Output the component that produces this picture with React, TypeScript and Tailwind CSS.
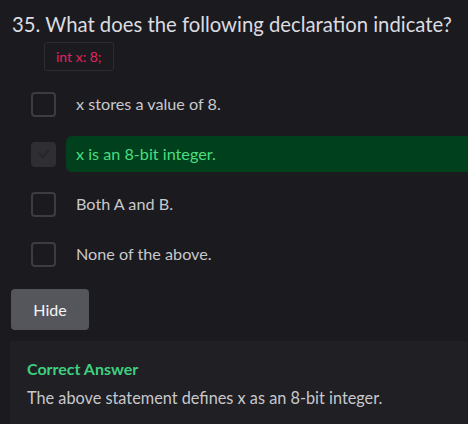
import React from "react";

const options = [
  { text: "x stores a value of 8.", correct: false },
  { text: "x is an 8-bit integer.", correct: true },
  { text: "Both A and B.", correct: false },
  { text: "None of the above.", correct: false },
];

export default function App() {
  return (
    <div className="w-[468px] h-[424px] overflow-hidden bg-[#1b1b1f] text-[#d4d4d8]" style={{ fontFamily: "Lato, 'Noto Sans', sans-serif" }}>
      <div className="pl-[12px] pt-[11px]">
        <h1 className="text-[20.3px] leading-[26px] text-[#dcdce0]">35. What does the following declaration indicate?</h1>
        <div className="ml-[32px] mt-[5px] inline-flex h-[29px] items-center rounded-[3px] border border-[#2c2c31] px-[11px] text-[14px] text-[#e0245e]">
          int x: 8;
        </div>
      </div>
      <div className="mt-[15px] flex flex-col gap-[14px]">
        {options.map((o) => (
          <div key={o.text} className="flex h-[36px] items-center">
            <div className="ml-[31px] flex w-[35px] shrink-0">
              {o.correct ? (
                <div className="flex h-[25px] w-[25px] items-center justify-center rounded-[4px] bg-[#2e2e33]">
                  <svg width="14" height="14" viewBox="0 0 24 24" fill="none" stroke="#26262b" strokeWidth="4" strokeLinecap="round" strokeLinejoin="round">
                    <path d="M5 12l5 5 9-10" />
                  </svg>
                </div>
              ) : (
                <div className="h-[25px] w-[25px] rounded-[4px] border-2 border-[#3c3c42]" />
              )}
            </div>
            <div className={`flex h-[36px] flex-1 items-center rounded-l-[6px] pl-[10px] text-[16.2px] ${o.correct ? "bg-[#01401c] text-[#4ade80]" : "text-[#c8c8cc]"}`}>
              {o.text}
            </div>
          </div>
        ))}
      </div>
      <button className="ml-[11px] mt-[17px] flex h-[41px] w-[78px] items-center justify-center rounded-[4px] bg-[#54565b] text-[16px] text-[#f4f4f5]">
        Hide
      </button>
      <div className="ml-[10px] mt-[11px] h-[90px] bg-[#1f1f24] pl-[17px] pt-[17px]">
        <div className="text-[16px] font-bold leading-[22px] text-[#3ecf80]">Correct Answer</div>
        <div className="mt-[7px] text-[16.3px] leading-[22px] text-[#c8c8cc]">The above statement defines x as an 8-bit integer.</div>
      </div>
    </div>
  );
}
